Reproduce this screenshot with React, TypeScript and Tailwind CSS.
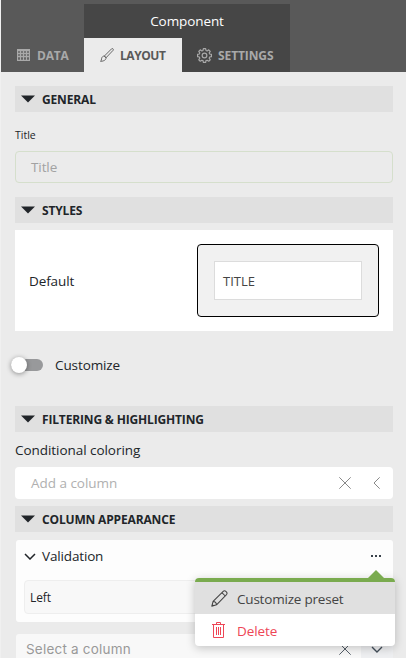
import React from "react";

function Section({ title, className = "" }: { title: string; className?: string }) {
  return (
    <div className={`flex h-[26px] shrink-0 items-center bg-[#e0e0e0] pl-[6px] text-[#212529] ${className}`}>
      <svg width="14" height="8" viewBox="0 0 14 8" className="mr-[7px]">
        <path d="M0 .5h14L7 7.500z" fill="currentColor" />
      </svg>
      <span className="whitespace-nowrap pt-[2px] text-[12px] font-bold leading-4 tracking-[-0.16px]">{title}</span>
    </div>
  );
}

function TableIcon() {
  return (
    <svg width="13" height="12" viewBox="0 0 13 12" fill="none" stroke="currentColor">
      <path d="M.5.5h12v11H.5zM0 1.500h13M0 4.500h13M0 7.500h13M3.500 2v10M6.500 2v10M9.500 2v10" strokeWidth="1.300" />
    </svg>
  );
}

function BrushIcon() {
  return (
    <svg width="14" height="14" viewBox="0 0 14 14" fill="none" stroke="currentColor" strokeWidth=".9" strokeLinejoin="round">
      <path d="M4.400 8 11.600.8c1-.8 2.300.4 1.500 1.500L6 9.800z" />
      <path d="M4.400 8 6 9.800c.3 1.800-2 3.400-5.400 3.600C1.400 12.800 1.300 11.700 1.700 10.200 2.100 8.700 3.200 7.900 4.400 8z" />
    </svg>
  );
}

function GearIcon() {
  return (
    <svg width="15" height="15" viewBox="0 0 16 16" fill="none" stroke="currentColor" strokeWidth="1.300" strokeLinejoin="round">
      <path d="M6.800.7h2.400l.4 1.900 1.200.5 1.700-1.100 1.600 1.600L13 5.200l.5 1.200 1.900.4v2.400l-1.900.4-.5 1.200 1.100 1.700-1.600 1.600-1.700-1.100-1.200.5-.4 1.900H6.800l-.4-1.900-1.200-.5-1.700 1.100-1.600-1.600L3 10.800l-.5-1.200-1.900-.4V6.800l1.900-.4L3 5.200 1.900 3.600 3.500 2l1.700 1.100 1.200-.5z" />
      <circle cx="8" cy="8" r="2.500" />
    </svg>
  );
}

function PencilIcon() {
  return (
    <svg width="17" height="17" viewBox="0 0 17 17" fill="none" stroke="currentColor" strokeLinejoin="round">
      <path d="m.8 16.200 1.300-4.800L12.200 1.300c1.700-1.700 5 1.300 3.300 3.300L5.500 14.800zM2.100 11.400c1.800.1 3.300 1.500 3.400 3.400M10.900 2.600l3.400 3.400M1.300 14.600l1.100 1.100" strokeWidth="1.050" />
    </svg>
  );
}

function TrashIcon() {
  return (
    <svg width="13" height="16" viewBox="0 0 13 16" fill="none" stroke="currentColor">
      <path d="M0 2.500h13M4.500 2V.5h4V2M1.500 3v12.500h10V3M4.500 5v8M6.500 5v8M8.500 5v8" />
    </svg>
  );
}

function Cross() {
  return (
    <svg width="12" height="12" viewBox="0 0 12 12" fill="none" stroke="currentColor">
      <path d="m.3.300 11.400 11.400M11.700.3.300 11.700" />
    </svg>
  );
}

export default function App() {
  return (
    <div className="relative flex h-[658px] w-[406px] flex-col overflow-hidden border-l border-[#f0f0f0] bg-[#ebebeb] font-['Open_Sans','Noto_Sans',sans-serif] text-[#212529]">
      <header className="flex h-[72px] shrink-0 flex-col bg-[#595959] pt-1">
        <div className="ml-[83px] flex h-[34px] w-[206px] items-center justify-center bg-[#464646] pt-px text-[13.500px] tracking-[-0.1px] text-white">Component</div>
        <nav className="flex h-[34px] text-[12px] font-bold">
          <div className="flex w-[83px] items-center pl-4 text-[#a9a9a9]">
            <TableIcon />
            <span className="ml-[7px] pt-px tracking-[-0.2px]">DATA</span>
          </div>
          <div className="flex w-[98px] items-center bg-[#ebebeb] pl-4 text-[#595959]">
            <BrushIcon />
            <span className="ml-[6px] pt-px tracking-[-0.45px]">LAYOUT</span>
          </div>
          <div className="flex w-[108px] items-center bg-[#464646] pl-[15px] text-[#a9a9a9]">
            <GearIcon />
            <span className="ml-[6px] pt-px tracking-[-0.1px]">SETTINGS</span>
          </div>
        </nav>
      </header>

      <main className="flex flex-col pl-[14px] pr-[13px] pt-[14px]">
        <Section title="GENERAL" />
        <div className="mt-[15px] h-4 text-[10.500px] leading-4">Title</div>
        <div className="mt-2 flex h-8 items-center rounded-[4px] border border-[#d5dfcc] pl-[15px] pt-px text-[13.500px] tracking-[-0.1px] text-[#a2a2a2]">Title</div>
        <Section title="STYLES" className="mt-[14px]" />
        <div className="mt-[7px] flex h-[101px] items-center justify-between bg-white pl-[14px] pr-[14px]">
          <span className="pt-[2px] text-[13.500px] tracking-[-0.1px]">Default</span>
          <div className="flex h-[73px] w-[182px] items-center justify-center rounded-[4px] border border-black bg-[#f1f1f1]">
            <div className="flex h-[39px] w-[148px] items-center border border-[#dcdcdc] bg-white pl-2 pt-[2px] text-[13px] text-[#444]">TITLE</div>
          </div>
        </div>
        <div className="-ml-1 mt-[26px] flex h-4 items-center">
          <div className="flex h-3 w-8 items-center rounded-full bg-[#98999b]">
            <div className="size-4 shrink-0 rounded-full bg-white shadow-[0_1px_5px_rgba(0,0,0,0.4)]" />
          </div>
          <span className="ml-3 text-[13.500px] tracking-[-0.1px]">Customize</span>
        </div>
        <Section title="FILTERING & HIGHLIGHTING" className="mt-[33px]" />
        <div className="mt-2 h-5 text-[13.500px] leading-5 tracking-[-0.05px]">Conditional coloring</div>
        <div className="mt-[7px] flex h-8 items-center rounded-[4px] bg-white pl-4 pr-[13px] text-[#888]">
          <span className="flex-1 text-[13.500px] tracking-[-0.03px] text-[#b0b0b0]">Add a column</span>
          <Cross />
          <svg width="7" height="12" viewBox="0 0 7 12" fill="none" stroke="currentColor" className="ml-[22px]">
            <path d="M6.700.3 1 6l5.700 5.700" />
          </svg>
        </div>
        <Section title="COLUMN APPEARANCE" className="mt-[7px]" />
        <div className="ml-px mt-2 h-[82px] rounded-[3px] bg-[#fdfdfd] px-2">
          <div className="flex h-8 items-center">
            <svg width="12" height="7" viewBox="0 0 12 7" fill="none" stroke="currentColor" strokeWidth="1.500">
              <path d="m1 1 5 5 5-5" />
            </svg>
            <span className="ml-[6px] pt-px text-[13.500px] tracking-[-0.15px]">Validation</span>
            <div className="ml-auto mr-[4px] flex gap-[2px]">
              <i className="size-[2px] bg-[#39424b]" />
              <i className="size-[2px] bg-[#39424b]" />
              <i className="size-[2px] bg-[#39424b]" />
            </div>
          </div>
          <div className="mt-2 flex h-[34px] items-center rounded-[4px] border border-[#eeeeee] bg-[#f8f8f8] pl-[5px] pt-[2px] text-[12px] tracking-[-0.1px]">Left</div>
        </div>
        <div className="ml-px mt-3 flex h-8 rounded-[3px] bg-[#f8f8f8]">
          <span className="flex-1 pl-[10px] font-['Inter',sans-serif] text-[13.500px] tracking-[0.2px] leading-[31px] text-[#999]">Select a column</span>
          <div className="mr-[10px] mt-[9px] text-[#555f69]">
            <Cross />
          </div>
          <div className="flex w-8 justify-center rounded-r-[3px] bg-[#eeeff1] pt-[12px]">
            <svg width="12" height="7" viewBox="0 0 12 7" fill="none" stroke="#444f5a" strokeWidth="1.400">
              <path d="m1 1 5 5 5-5" />
            </svg>
          </div>
        </div>
      </main>

      <div className="absolute left-[194px] top-[578px] w-[200px] rounded-[4px] bg-white text-[13.500px] shadow-[0_2px_10px_rgba(0,0,0,0.22)]">
        <svg width="16" height="8" viewBox="0 0 16 8" className="absolute -top-2 left-[173px]">
          <path d="M0 8 8 0l8 8z" fill="#7aab4f" />
        </svg>
        <div className="h-1 rounded-t-[4px] bg-[#7aab4f]" />
        <div className="flex h-8 items-center bg-[#e0e0e0] pl-4 text-[#444]">
          <PencilIcon />
          <span className="ml-[9px] pt-[3px] tracking-[-0.2px]">Customize preset</span>
        </div>
        <div className="flex h-8 items-center pl-[17px] text-[#ee4656]">
          <TrashIcon />
          <span className="ml-3 pt-[3px] tracking-[-0.1px]">Delete</span>
        </div>
      </div>
    </div>
  );
}
